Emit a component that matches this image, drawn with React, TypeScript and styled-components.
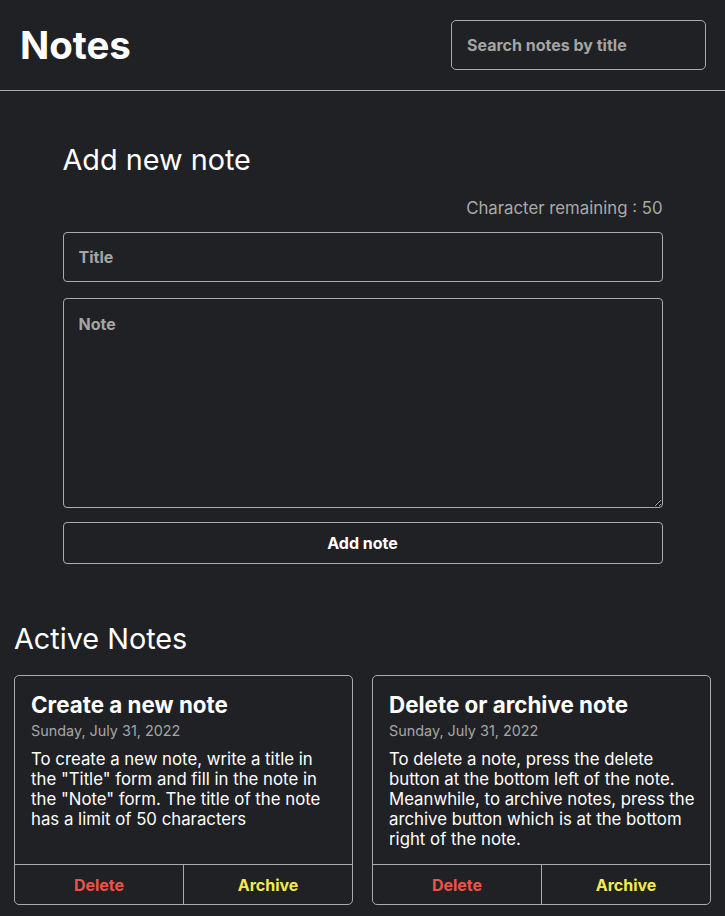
import styled, { createGlobalStyle } from 'styled-components'

const GlobalStyle = createGlobalStyle`
  * {
    box-sizing: border-box;
  }
  body {
    margin: 0;
    background-color: #202124;
    color: white;
    font-family: 'Inter', sans-serif;
  }
`

const Header = styled.header`
  display: flex;
  justify-content: space-between;
  align-items: center;
  height: 91px;
  padding: 0 19px 0 20px;
  border-bottom: 1px solid #aaa;
`

const Logo = styled.h1`
  margin: 0;
  font-size: 38.4px;
  font-weight: bold;
`

const SearchInput = styled.input`
  width: 255px;
  height: 50px;
  padding: 0 15px;
  background: transparent;
  border: 1px solid #aaa;
  border-radius: 5px;
  color: white;
  font-family: 'Inter', sans-serif;
  font-size: 16px;
  font-weight: bold;

  &::placeholder {
    color: #a4a4a4;
  }
`

const Body = styled.main`
  padding: 0 14px 40px;
`

const NoteInput = styled.section`
  max-width: 600px;
  margin: 0 auto;
  padding-top: 52px;
`

const FormTitle = styled.h2`
  margin: 0;
  font-size: 28.8px;
  font-weight: normal;
  line-height: 34px;
`

const CharLimit = styled.p`
  margin: 21px 0 14px;
  text-align: right;
  font-size: 16.8px;
  line-height: 20px;
  color: #aaa;
`

const Field = styled.input`
  display: block;
  width: 100%;
  height: 50px;
  padding: 0 15px;
  background: transparent;
  border: 1px solid #aaa;
  border-radius: 4px;
  color: white;
  font-family: 'Inter', sans-serif;
  font-size: 16px;
  font-weight: bold;

  &::placeholder {
    color: #a4a4a4;
  }
`

const TextArea = styled.textarea`
  display: block;
  width: 100%;
  height: 210px;
  margin-top: 16px;
  padding: 15px 15px;
  background: transparent;
  border: 1px solid #aaa;
  border-radius: 4px;
  color: white;
  font-family: 'Inter', sans-serif;
  font-size: 16px;
  font-weight: bold;
  resize: vertical;

  &::placeholder {
    color: #a4a4a4;
  }
`

const SubmitButton = styled.button`
  display: block;
  width: 100%;
  height: 42px;
  margin-top: 14px;
  background: transparent;
  border: 1px solid #aaa;
  border-radius: 4px;
  color: white;
  font-family: 'Inter', sans-serif;
  font-size: 16px;
  font-weight: bold;
  cursor: pointer;
`

const SectionTitle = styled.h2`
  margin: 56px 0 17px;
  font-size: 28.8px;
  font-weight: normal;
  line-height: 38px;
`

const NotesList = styled.div`
  display: grid;
  grid-template-columns: repeat(2, 1fr);
  gap: 19px;
`

const Card = styled.article`
  display: flex;
  flex-direction: column;
  border: 1px solid #aaa;
  border-radius: 5px;
  overflow: hidden;
`

const CardContent = styled.div`
  flex: 1;
  padding: 15px 15px 15px 16px;
`

const CardTitle = styled.h3`
  margin: 0;
  font-size: 22.4px;
  font-weight: bold;
  line-height: 27px;
`

const CardDate = styled.p`
  margin: 4px 0 0;
  font-size: 14.4px;
  line-height: 17px;
  color: #a6a6a6;
`

const CardBody = styled.p`
  margin: 10px 0 0;
  font-size: 16.8px;
  line-height: 20px;
`

const CardActions = styled.div`
  display: flex;
  border-top: 1px solid #aaa;
`

const ActionButton = styled.button<{ $color: string; $divider?: boolean }>`
  flex: 1;
  height: 39px;
  background: transparent;
  border: 0;
  border-right: ${({ $divider }) => ($divider ? '1px solid #aaa' : '0')};
  color: ${({ $color }) => $color};
  font-family: 'Inter', sans-serif;
  font-size: 16px;
  font-weight: bold;
  cursor: pointer;
`

const notes = [
  {
    id: 1,
    title: 'Create a new note',
    date: 'Sunday, July 31, 2022',
    body: 'To create a new note, write a title in the "Title" form and fill in the note in the "Note" form. The title of the note has a limit of 50 characters',
  },
  {
    id: 2,
    title: 'Delete or archive note',
    date: 'Sunday, July 31, 2022',
    body: 'To delete a note, press the delete button at the bottom left of the note. Meanwhile, to archive notes, press the archive button which is at the bottom right of the note.',
  },
]

export default function App() {
  return (
    <>
      <GlobalStyle />
      <Header>
        <Logo>Notes</Logo>
        <SearchInput placeholder="Search notes by title" />
      </Header>
      <Body>
        <NoteInput>
          <FormTitle>Add new note</FormTitle>
          <CharLimit>Character remaining : 50</CharLimit>
          <Field placeholder="Title" />
          <TextArea placeholder="Note" />
          <SubmitButton>Add note</SubmitButton>
        </NoteInput>

        <SectionTitle>Active Notes</SectionTitle>
        <NotesList>
          {notes.map((note) => (
            <Card key={note.id}>
              <CardContent>
                <CardTitle>{note.title}</CardTitle>
                <CardDate>{note.date}</CardDate>
                <CardBody>{note.body}</CardBody>
              </CardContent>
              <CardActions>
                <ActionButton $color="#f0524a" $divider>
                  Delete
                </ActionButton>
                <ActionButton $color="#f4ea4f">Archive</ActionButton>
              </CardActions>
            </Card>
          ))}
        </NotesList>
      </Body>
    </>
  )
}
